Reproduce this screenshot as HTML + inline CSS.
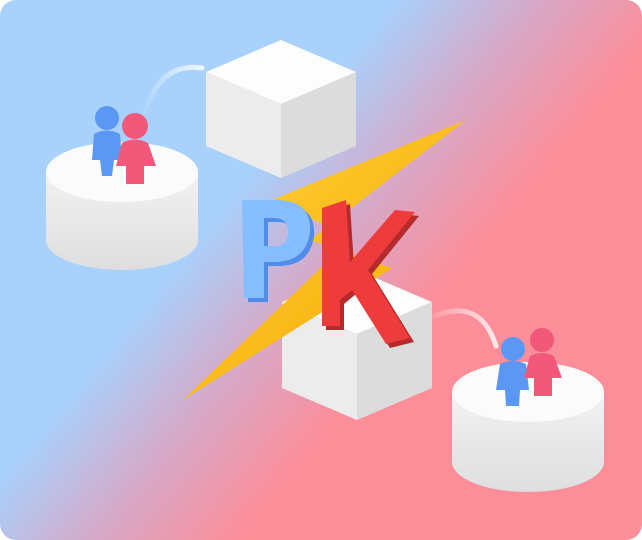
<!DOCTYPE html>
<html><head><meta charset="utf-8"><style>
html,body{margin:0;padding:0;background:#fff}
svg{display:block}
</style></head><body>
<svg width="642" height="540" viewBox="0 0 642 540" xmlns="http://www.w3.org/2000/svg">
<defs>
<linearGradient id="bg" x1="230" y1="200" x2="400" y2="340" gradientUnits="userSpaceOnUse">
<stop offset="0" stop-color="#a8d1fc"/><stop offset="0.5" stop-color="#d6a9c8"/><stop offset="1" stop-color="#fc8e9a"/>
</linearGradient>
<linearGradient id="cyl" x1="0" x2="0" y1="0" y2="1"><stop offset="0" stop-color="#f2f2f2"/><stop offset="1" stop-color="#dedede"/></linearGradient>
<linearGradient id="bolt" x1="0" x2="1" y1="0" y2="1"><stop offset="0" stop-color="#ffd23a"/><stop offset="1" stop-color="#f5a800"/></linearGradient>
<linearGradient id="arc" x1="0" x2="1"><stop offset="0" stop-color="#fff" stop-opacity="0.1"/><stop offset="1" stop-color="#fff" stop-opacity="0.8"/></linearGradient>
</defs>
<rect width="642" height="540" rx="16" fill="url(#bg)"/>
<path d="M145 112 Q160 62 202 68" fill="none" stroke="url(#arc)" stroke-width="5" stroke-linecap="round"/>
<path d="M430 318 Q480 295 496 346" fill="none" stroke="url(#arc)" stroke-width="5" stroke-linecap="round"/>
<path d="M46 172 L46 240 A76 30 0 0 0 198 240 L198 172 Z" fill="url(#cyl)"/>
<ellipse cx="122" cy="172" rx="76" ry="30" fill="#fbfbfb"/>
<polygon points="281,40 356,72 281,104 206,72" fill="#fdfdfd"/>
<polygon points="206,72 281,104 281,178 206,146" fill="#ececec"/>
<polygon points="356,72 281,104 281,178 356,146" fill="#dcdcdc"/>
<polygon points="357,270 432,302 357,334 282,302" fill="#fdfdfd"/>
<polygon points="282,302 357,334 357,420 282,388" fill="#ececec"/>
<polygon points="432,302 357,334 357,420 432,388" fill="#dcdcdc"/>
<path d="M452 392 L452 462 A76 30 0 0 0 604 462 L604 392 Z" fill="url(#cyl)"/>
<ellipse cx="528" cy="392" rx="76" ry="30" fill="#fbfbfb"/>
<polygon points="466,120 272,200 352,238 183,400 392,268 310,240" fill="url(#bolt)"/>
<!-- P with depth -->
<path d="M246 204 L284 204 Q316 206 314 236 Q310 266 278 266 L268 266 L268 302 L248 302 Z M268 222 L268 250 L278 250 Q292 250 292 236 Q292 222 278 222 Z" fill="#4f8de8" fill-rule="evenodd"/>
<path d="M242 200 L280 200 Q312 202 310 232 Q306 262 274 262 L264 262 L264 298 L244 298 Z M264 218 L264 246 L274 246 Q288 246 288 232 Q288 218 274 218 Z" fill="#86bdff" fill-rule="evenodd"/>
<!-- K with depth -->
<path d="M326 212 L350 204 L354 266 L399 214 L419 216 L372 274 L414 342 L390 348 L356 294 L344 304 L344 330 L326 330 Z" fill="#b52a2a"/>
<path d="M322 208 L346 200 L350 262 L395 210 L415 212 L368 270 L410 338 L386 344 L352 290 L340 300 L340 326 L322 326 Z" fill="#ee3b3b"/>
<g>
<circle cx="107" cy="118" r="12" fill="#5b98f4"/>
<path d="M94 134 Q107 127 120 134 L122 160 L114 160 L112 176 L102 176 L100 160 L92 160 Z" fill="#5b98f4"/>
<circle cx="135" cy="126" r="13" fill="#f2587a"/>
<path d="M122 143 Q135 136 148 143 L156 166 L144 166 L144 184 L126 184 L126 166 L116 166 Z" fill="#f2587a"/>
</g>
<g>
<circle cx="513" cy="349" r="12" fill="#5b98f4"/>
<path d="M500 364 Q513 358 526 364 L529 390 L520 390 L519 406 L506 406 L505 390 L496 390 Z" fill="#5b98f4"/>
<circle cx="542" cy="340" r="12" fill="#f2587a"/>
<path d="M530 356 Q542 350 554 356 L562 378 L552 378 L552 396 L534 396 L534 378 L524 378 Z" fill="#f2587a"/>
</g>
</svg>
</body></html>
